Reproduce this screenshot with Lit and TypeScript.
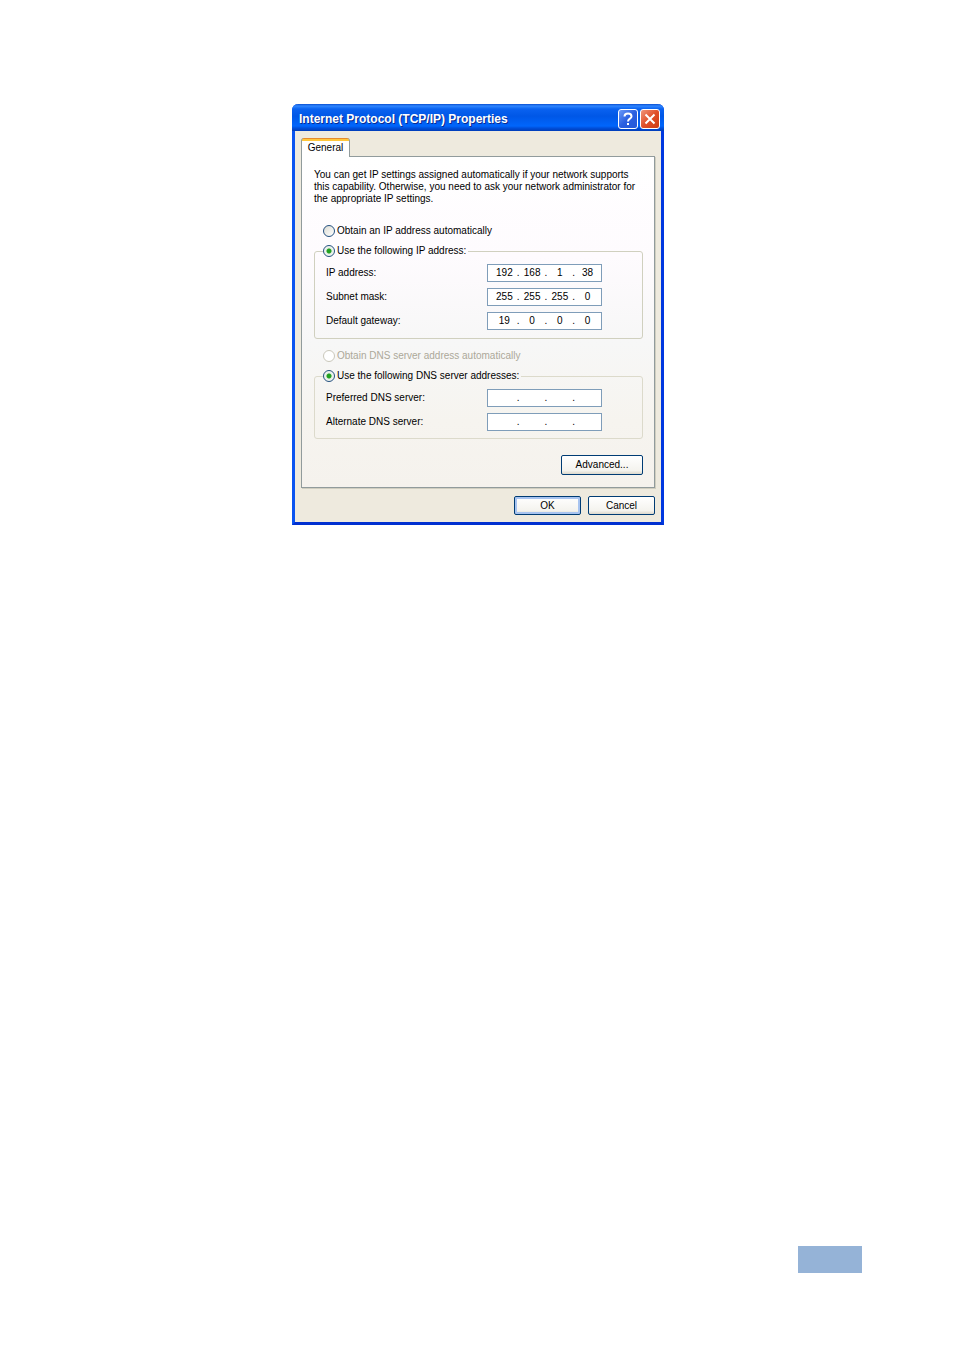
import { LitElement, html, css, nothing } from "lit";
import { customElement, property } from "lit/decorators.js";

@customElement("ip-field")
class IpField extends LitElement {
  @property() label = "";
  @property({ type: Array }) octets: string[] = ["", "", "", ""];

  static styles = css`
    :host {
      display: flex;
      align-items: center;
      justify-content: space-between;
    }
    .name {
      line-height: 18px;
      white-space: nowrap;
    }
    .box {
      box-sizing: border-box;
      display: flex;
      width: 115px;
      height: 18px;
      padding: 0 2px 0 5px;
      border: 1px solid #7f9db9;
      background: #fff;
      line-height: 16px;
    }
    .octet {
      flex: 1;
      min-width: 0;
      width: 0;
      padding: 0;
      border: 0;
      outline: 0;
      background: transparent;
      color: #000;
      font: inherit;
      text-align: center;
    }
    .dot {
      width: 5px;
      text-align: center;
    }
  `;

  render() {
    return html`
      <span class="name" id="name">${this.label}</span>
      <div class="box" role="group" aria-labelledby="name">
        ${this.octets.map(
          (value, i) => html`${i ? html`<span class="dot">.</span>` : nothing}<input
              class="octet"
              type="text"
              maxlength="3"
              aria-label="${this.label} part ${i + 1}"
              .value=${value}
            />`
        )}
      </div>
    `;
  }
}

@customElement("app-root")
class AppRoot extends LitElement {
  static styles = css`
    :host {
      display: block;
      background: #fff;
      color: #000;
      font: 10px/12px "Liberation Sans", Arial, sans-serif;
    }
    .page {
      box-sizing: border-box;
      display: flex;
      flex-direction: column;
      min-height: 100vh;
      padding: 104px 91px 79px 94px;
    }
    .dialog {
      box-sizing: border-box;
      align-self: center;
      width: 100%;
      max-width: 372px;
      border: 3px solid #0a54f0;
      border-top: 0;
      border-right-color: #0038e0;
      border-bottom-color: #0030d0;
      border-radius: 6px 6px 0 0;
      background: #eeeade;
    }
    .titlebar {
      display: flex;
      align-items: center;
      gap: 2px;
      height: 27px;
      margin: 0 -3px;
      padding: 3px 4px 0 7px;
      box-sizing: border-box;
      border-radius: 6px 6px 0 0;
      background: linear-gradient(#0a4fd0, #2f86ff 2px, #0a62f0 5px, #0057e6 12px, #0066fc 22px, #0050dc 24px, #003cb8);
      color: #fff;
    }
    .title {
      flex: 1;
      margin: 0;
      font-size: 12px;
      line-height: 16px;
      font-weight: 700;
      text-shadow: 1px 1px #0a2a90;
      white-space: nowrap;
    }
    .caption {
      width: 20px;
      height: 20px;
      padding: 0;
      border: 1px solid #fff;
      border-radius: 3px;
      background: linear-gradient(135deg, #6c9af8, #2a5fe0 50%, #2458d8);
    }
    .close {
      background: linear-gradient(135deg, #f0967c, #e04f28 50%, #cc3c14);
    }
    .caption svg {
      display: block;
      width: 18px;
      height: 18px;
    }
    .body {
      padding: 7px 6px 7px;
    }
    .tab {
      position: relative;
      z-index: 1;
      display: block;
      box-sizing: border-box;
      width: 49px;
      height: 19px;
      margin-bottom: -1px;
      padding: 0;
      border: 1px solid #919b9c;
      border-top: 0;
      border-bottom: 0;
      border-radius: 3px 3px 0 0;
      background: linear-gradient(#e68b2c 1px, #ffc73c 1px, #ffc73c 3px, #fff 3px);
      color: #000;
      font: inherit;
    }
    .panel {
      display: flex;
      flex-direction: column;
      padding: 12px 11px 12px 12px;
      border: 1px solid #919b9c;
      box-shadow: 1px 1px #d0cec0;
      background: linear-gradient(#fff, #fefbfe 30%, #f7f7f7 56%, #f6f4ef 80%, #f5f2ed);
    }
    .intro {
      margin: 0 0 19px;
    }
    .choice {
      display: flex;
      align-items: center;
      gap: 2px;
      height: 14px;
      white-space: nowrap;
    }
    .lone {
      margin: 0 0 6px 9px;
    }
    .disabled {
      color: #aca899;
    }
    .choice input {
      appearance: none;
      box-sizing: border-box;
      flex: none;
      width: 12px;
      height: 12px;
      margin: 0;
      border: 1px solid #24507f;
      border-radius: 50%;
      background: linear-gradient(135deg, #dcdcd4, #fff);
    }
    .choice input:checked {
      background: radial-gradient(circle, #21a121 2px, #e6eee6 3px, #fff);
    }
    .choice input:disabled {
      border-color: #cac8bb;
      background: #fff;
    }
    fieldset {
      display: flex;
      flex-direction: column;
      gap: 6px;
      min-width: 0;
      margin: 0;
      padding: 6px 40px 8px 11px;
      border: 1px solid #d0d0bf;
      border-radius: 3px;
    }
    fieldset.address {
      margin-bottom: 10px;
    }
    fieldset.dns {
      margin-bottom: 16px;
      padding-bottom: 7px;
      border-color: #dcdacb;
    }
    legend {
      margin-left: -3px;
      padding: 0 2px 0 0;
    }
    .push {
      box-sizing: border-box;
      width: 67px;
      height: 19px;
      padding: 0;
      border: 1px solid #003c74;
      border-radius: 2px;
      background: linear-gradient(#fff, #f4f3ee 80%, #dcd8cc);
      color: #000;
      font: inherit;
    }
    .advanced {
      align-self: flex-end;
      width: 82px;
      height: 20px;
    }
    .default {
      box-shadow: inset 0 0 0 2px #a8c4f0;
    }
    .actions {
      display: flex;
      justify-content: flex-end;
      gap: 7px;
      margin-top: 8px;
    }
    .marker {
      align-self: flex-end;
      width: 64px;
      height: 27px;
      margin-top: auto;
      background: #95b3d7;
    }
  `;

  render() {
    return html`
      <main class="page">
        <section class="dialog" role="dialog" aria-labelledby="title">
          <header class="titlebar">
            <h1 class="title" id="title">Internet Protocol (TCP/IP) Properties</h1>
            <button class="caption" type="button" aria-label="Help">
              <svg viewBox="0 0 18 18" fill="none" stroke="#fff" stroke-width="2">
                <path d="M5.5 6.5C5.5 4.5 7 3.5 9 3.5S12.5 4.6 12.5 6.4C12.5 8.8 9 8.6 9 11.5" />
                <path d="M9 13v2" />
              </svg>
            </button>
            <button class="caption close" type="button" aria-label="Close">
              <svg viewBox="0 0 18 18" fill="none" stroke="#fff" stroke-width="2">
                <path d="M4.5 4.5l9 9M13.5 4.5l-9 9" />
              </svg>
            </button>
          </header>
          <div class="body">
            <div role="tablist">
              <button class="tab" type="button" role="tab" aria-selected="true">General</button>
            </div>
            <div class="panel" role="tabpanel">
              <p class="intro">
                You can get IP settings assigned automatically if your network supports<br />
                this capability. Otherwise, you need to ask your network administrator for<br />
                the appropriate IP settings.
              </p>
              <label class="choice lone">
                <input type="radio" name="ip" />Obtain an IP address automatically
              </label>
              <fieldset class="address">
                <legend>
                  <label class="choice">
                    <input type="radio" name="ip" checked />Use the following IP address:
                  </label>
                </legend>
                <ip-field label="IP address:" .octets=${["192", "168", "1", "38"]}></ip-field>
                <ip-field label="Subnet mask:" .octets=${["255", "255", "255", "0"]}></ip-field>
                <ip-field label="Default gateway:" .octets=${["19", "0", "0", "0"]}></ip-field>
              </fieldset>
              <label class="choice lone disabled">
                <input type="radio" name="dns" disabled />Obtain DNS server address automatically
              </label>
              <fieldset class="dns">
                <legend>
                  <label class="choice">
                    <input type="radio" name="dns" checked />Use the following DNS server addresses:
                  </label>
                </legend>
                <ip-field label="Preferred DNS server:"></ip-field>
                <ip-field label="Alternate DNS server:"></ip-field>
              </fieldset>
              <button class="push advanced" type="button">Advanced...</button>
            </div>
            <div class="actions">
              <button class="push default" type="button">OK</button>
              <button class="push" type="button">Cancel</button>
            </div>
          </div>
        </section>
        <div class="marker"></div>
      </main>
    `;
  }
}
